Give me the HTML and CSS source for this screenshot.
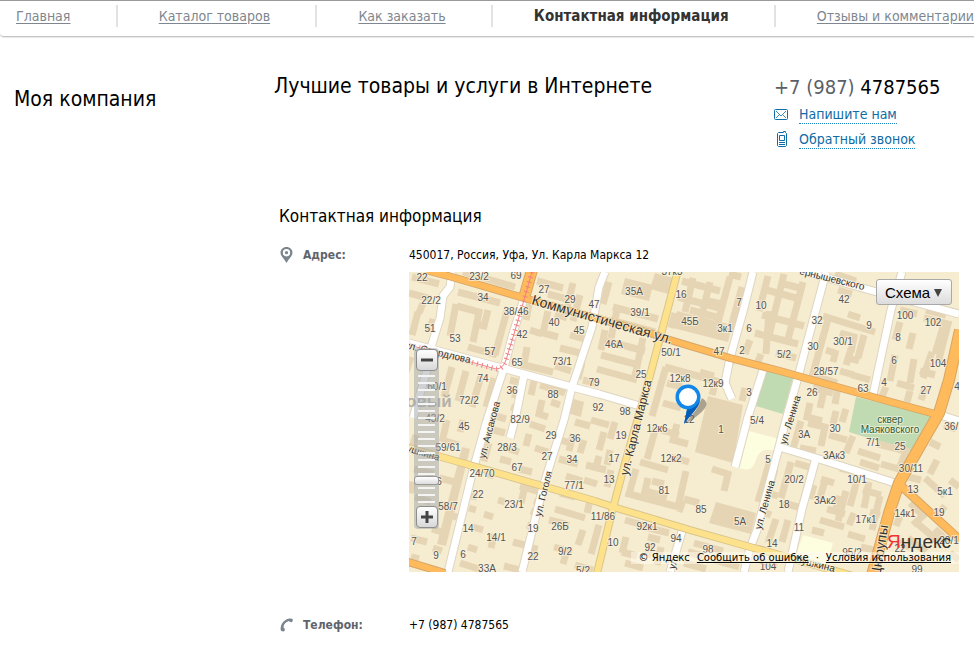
FILE: index.html
```html
<!DOCTYPE html>
<html lang="ru">
<head>
<meta charset="utf-8">
<title>Моя компания — Контактная информация</title>
<meta name="viewport" content="width=device-width, initial-scale=1">
<link rel="stylesheet" href="styles.css">
</head>
<body>
<nav class="nav">
  <ul class="nav-list">
    <li><a href="#">Главная</a></li>
    <li><a href="#">Каталог товаров</a></li>
    <li><a href="#">Как заказать</a></li>
    <li><strong>Контактная информация</strong></li>
    <li><a href="#">Отзывы и комментарии</a></li>
  </ul>
</nav>

<header class="header">
  <div class="company">Моя компания</div>
  <div class="slogan">Лучшие товары и услуги в Интернете</div>
  <div class="contacts">
    <div class="phone"><span>+7 (987)</span> 4787565</div>
    <div class="contact-row">
      <svg width="15" height="15" viewBox="0 0 15 15" fill="none" stroke="#0d6da8"><rect x="0.500" y="2.500" width="13" height="10" rx="1"/><path d="M2 4l5 5 5-5M2 11l3-3M12 11L9 8" stroke-width=".8"/></svg>
      <a href="#">Напишите нам</a>
    </div>
    <div class="contact-row">
      <svg width="15" height="17" viewBox="0 0 15 17" fill="none" stroke="#0d6da8"><path d="M3.500 2.500l1-1h5V.5h2v1l1 1v12l-1 1h-7l-1-1z"/><path d="M5.500 4.500h5v5h-5zM5 11.500h6M5 13.500h6"/></svg>
      <a href="#">Обратный звонок</a>
    </div>
  </div>
</header>

<main class="main">
  <h1>Контактная информация</h1>
  <dl class="details">
    <dt>
      <svg width="15" height="16" viewBox="0 0 15 16"><path fill="#7b858e" fill-rule="evenodd" d="M7.500 0C4 0 1.500 2.500 1.500 5.700 1.500 9 5 11.500 7.500 16 10 11.500 13.500 9 13.500 5.700 13.500 2.500 11 0 7.500 0zm0 2a3.700 3.700 0 1 1 0 7.400 3.700 3.700 0 0 1 0-7.400z"/><circle cx="7.500" cy="5.700" r="1.600" fill="#7b858e"/></svg>
      Адрес:
    </dt>
    <dd>450017, Россия, Уфа, Ул. Карла Маркса 12
      <div class="map">
<svg class="map-canvas" viewBox="409 272 550 300" preserveAspectRatio="xMidYMid slice" role="img" aria-label="Карта">
  <rect x="409" y="272" width="550" height="300" fill="#f6ecd0"/>
  <g fill="#c0dab2"><path d="M766 371l27 7-10 36-27-8z"/><path d="M856 397l78 19-21 36-64-20z"/></g>
  <g fill="#fdfde0"><path d="M749 431l30 8-4 11-10 0q-7 2-9 10-4 12-12 9l-9-1z"/><path d="M803 535l30 8-6 22-32-7z"/></g>
  <!-- buildings -->
  <g fill="#e6d5b4">
    <path d="M708 396l35 9-10 58-38-11z"/><path d="M716 502l40 11-5 21-42-11z"/>
    <path d="M625 278l28 7-4 16-28-7zM655 273l22 6-5 16-22-6zM677 311l55 14-4 17-55-14z"/>
    <path d="M462 447l8 2-24 97-9-2zM570 398l14 4-3 15-14-4z"/>
  </g>
  <g fill="none" stroke="#e6d5b4" stroke-width="7">
    <path d="M409 293l22 6M412 277l27 7M458 292l42 11M463 272l52 15M418 312l-6 23M433 319l-4 13M456 304l-6 32M457 306l22 6-6 30M488 310l-4 16-8-2M508 307l-13 48M468 347l29 8M423 303l-4 10M411 357l-5 15"/>
    <path d="M548 311l-5 22 15 4M555 314l12 4M527 347l-3 18 29 7M537 281l26 7M548 294l22 6M529 304l-3 16M573 283l-6 24M580 295l-7 26M570 335l18 5M560 348l20 5M530 330l12 4M555 366l16 5"/>
    <path d="M452 367l-8 30M466 371l-8 30M481 376l-9 31M494 378l-8 29M510 380l8 2M512 394l8 2M511 407l6 2M540 385l25 8M542 400l-3 14 9 3M534 381l-3 14M551 402l9 3"/>
    <path d="M609 282l-6 22M613 307l45 12M610 320l45 12M602 340l43 11M601 355l38 10M597 369l40 11M617 310l-6 28M643 338l-8 38M582 363l-4 16M605 330l-4 20M583 380l16 4"/>
    <path d="M682 281l38 10M678 297l45 12M693 278l-8 34M710 282l-9 36M730 277l-16 60M742 287l-12 44M690 310l30 8M741 277l-12-3M675 313l-4 15M696 321l22 6M703 300l19 4"/>
    <path d="M665 367l51 14-4 14M666 367l-14 49M667 383l15 4M663 403l18 5M656 427l-9 32M661 430l18 5M677 424l-4 16 15 4M700 372l14 4M726 359l9 3M745 388l-3 13"/>
    <path d="M636 469l-7 25 49 13 8-36M640 462l28 8M648 478l-3 13 22 6M652 481l12 3M684 499l15 4M712 469l16 5-4 17M671 457l18 5M683 500l-4 12"/>
    <path d="M768 276l-9 35M763 289l33 9M784 274l-15 62M803 282l-16 61M762 315l42 11M755 333l43 11M769 311l-3 43M750 340l-5 14M776 353l20 5M761 354l-5 13M780 283l24 6"/>
    <path d="M838 290l14 4M835 274l21 7M823 316l52 16M828 319l-16 58M840 333l14 4-3 15M836 350l-3 12M845 357l14 4M864 335l-6 23M840 371l14 4M852 375l18 5M860 318l-12 -4M826 350l9 3M812 375l25 8M851 349l-5 16"/>
    <path d="M900 310l17 4M900 322l-5 18M913 333l-4 16M924 318l24 6-10 39M914 359l-4 24M895 355l-5 26M932 352l-9 26M897 383l17 5M920 371l15 4M925 388l-4 12M886 387l-5 12M910 391l-3 11M926 310l20 5M945 320l-10 34"/>
    <path d="M813 388l20 5M824 390l-4 18M838 387l-3 17M810 403l-3 14 15 4M836 411l-3 13M846 409l-4 13M801 421l-8 28M808 423l17 4-4 19M829 435l18 5M800 448l16 3M853 436l-7 17M858 451l22 7M878 444l28 7-7 18-18-5M860 462l19 6"/>
    <path d="M791 462l-10 36M795 463l17 5-12 44M814 485l-4 14M783 503l19 5M826 477l-7 24M821 479l13 4M827 509l18 5M820 520l24 7M846 491l-8 30M857 480l-7 26M869 482l-5 26M880 496l-8 34M863 490l18 5M854 513l-5 12M840 496l-4 12M840 468l16 4M870 512l10 3M848 534l17 5M861 547l20 5"/>
    <path d="M908 477l13 3M925 478l20 18M937 460l-7 14M950 480l9 7M910 503l15 14M928 511l-15 14M945 506l-9 11M900 516l-4 10M918 524l21 18M908 538l18 14M935 529l13 13M896 542l14 5M950 553l9 7M907 558l16 5M944 425l12 4M930 442l10 5"/>
    <path d="M463 420l-3 12M447 420l-5 22M418 401l-4 12M442 440l17 5M416 435l-4 14M414 469l20 5M413 482l-3 11M439 478l20 5M415 497l16 5M411 538l16 4M433 548l9 3M445 514l12 3M411 557l8 2M432 529l10 3M440 504l16 4"/>
    <path d="M495 416l11 3M490 429l15 4M489 443l-5 18M503 447l16 5M500 459l11 3M479 456l9 3M487 474l7 2M530 424l15 5M529 434l-3 12M535 448l13 4M519 469l13 3M520 486l26 8M524 490l-3 13M498 500l7 2M469 495l8 2M469 508l7 2M473 527l10 3M494 534l-3 14M468 547l9 3M484 514l9 3M513 542l19 5M535 545l-3 15M460 563l19 6M504 566l20 5"/>
    <path d="M575 422l15 4M573 434l-4 17M584 440l-4 13M591 420l18 5M604 432l-5 18M615 422l-5 17M560 440l14 4M559 459l19 5M586 465l20 5M599 456l-4 15M610 450l-3 15M566 476l16 5M584 480l13 4M611 470l-4 17M555 509l30 9M549 520l20 5M560 493l15 4M591 497l-4 16M599 525l-8 29M554 547l18 5M567 550l-4 14M583 530l-5 15M575 565l18 5M534 501l9 3M531 511l8 3M527 525l8 3"/>
    <path d="M625 520l18 5M637 525l32 8M648 537l12 3M626 537l-4 16M622 552l15 4M625 563l18 5M651 543l-4 14M661 547l-4 18M694 543l29 8M688 552l15 4M684 563l22 6M714 560l25 7M758 548l13 4M776 519l-8 24M763 512l8 3M768 493l10 3M788 520l-6 22M770 460l-12 42M775 469l-6 22M812 530l12 3M757 560l20 6"/>
  </g>
  <!-- street casings, then fills -->
  <defs>
    <g id="white-streets">
      <path d="M452 272l-2 15-7 9-3 22-8 26-5 26-14 48"/>
      <path d="M409 343l37 10 56 15 70 19 27 7 41 12"/>
      <path d="M524 298l-12 39-8 31-17 52-14 50-25 102"/>
      <path d="M605 272l-6 15-7 40-20 60-8 33-21 67-21 85"/>
      <path d="M524 375l-8 40-6 23"/>
      <path d="M753 272l-9 36-14 50-5 25 7 16"/>
      <path d="M763 370l-15 47-13 50"/>
      <path d="M826 272l-28 105-12 43-7 27-22 83-7 18-6 24"/>
      <path d="M800 270l66 19 93 25"/>
      <path d="M902 272l-11 38-18 85"/>
      <path d="M779 447l37 11 79 25M816 458l-14 51-14 63"/>
      <path d="M682 531l-12 41M940 415l19 6"/>
    </g>
    <g id="yellow-streets">
      <path d="M678 270l-18 68-12 45-23 80-12 45-16 65"/>
      <path d="M405 447l40 11 150 43 18 6 77 23 60 17 30 8 80 23"/>
    </g>
    <g id="orange-streets">
      <path d="M425 270l27 7 72 21 126 35 20 7 60 18 50 13 93 26 62 17"/>
      <path d="M405 561l40 12"/>
    </g>
    <g id="avenue"><path d="M532 270l-8 28M960 330l-11 50-10 33-23 40-17 30-10 30-17 62"/></g>
    <path id="branch" d="M898 483l62 57"/>
  </defs>
  <g fill="none" stroke-linejoin="round">
    <use href="#white-streets" stroke="#ded5c2" stroke-width="9"/>
    <use href="#white-streets" stroke="#fff" stroke-width="7"/>
    <use href="#yellow-streets" stroke="#d9c58b" stroke-width="8"/>
    <use href="#yellow-streets" stroke="#fee28b" stroke-width="6"/>
    <use href="#orange-streets" stroke="#d7a666" stroke-width="8"/>
    <use href="#branch" stroke="#d7a666" stroke-width="9"/>
    <use href="#avenue" stroke="#d7a666" stroke-width="12"/>
    <use href="#orange-streets" stroke="#ffba5b" stroke-width="6"/>
    <use href="#branch" stroke="#ffba5b" stroke-width="7"/>
    <use href="#avenue" stroke="#ffba5b" stroke-width="10"/>
  </g>
  <g fill="none" stroke="#f08080">
    <path d="M532 272l-8 28-10 34-8 26q-3 9-10 9l-87-24"/>
    <path d="M532 272l-8 28-10 34-8 26q-3 9-10 9l-87-24" stroke-width="5" stroke-dasharray="1 4"/>
  </g>
  <text class="district" x="406" y="407">овый</text>
  <g class="houses">
    <text x="422" y="281">22</text><text x="479" y="280">23/2</text><text x="516" y="279">69</text><text x="544" y="293">27</text><text x="570" y="303">29</text><text x="594" y="308">47</text><text x="431" y="304">22/2</text><text x="483" y="301">34</text><text x="516" y="315">38/46</text><text x="554" y="326">40</text><text x="579" y="334">45</text><text x="430" y="332">51</text><text x="455" y="342">53</text><text x="522" y="338">42</text><text x="490" y="355">57</text><text x="517" y="366">65</text><text x="562" y="365">73/1</text><text x="483" y="382">74</text><text x="512" y="394">36</text><text x="553" y="398">88</text><text x="594" y="386">79</text><text x="437" y="390">60/1</text><text x="469" y="404">72/2</text><text x="435" y="422">43/2</text><text x="520" y="423">82/9</text><text x="598" y="411">92</text><text x="625" y="415">98</text>
    <text x="672" y="275">37к3</text><text x="634" y="295">35А</text><text x="681" y="298">16</text><text x="640" y="316">39/1</text><text x="690" y="325">45Б</text><text x="614" y="348">46А</text><text x="671" y="356">50/1</text><text x="641" y="378">25</text><text x="739" y="306">7</text><text x="761" y="309">10</text><text x="725" y="332">3к1</text><text x="749" y="332">6</text><text x="719" y="355">47</text><text x="742" y="354">2</text><text x="680" y="382">12к8</text><text x="713" y="387">12к9</text><text x="749" y="396">3</text><text x="757" y="424">5/4</text>
    <text x="844" y="303">42</text><text x="905" y="319">100</text><text x="933" y="326">102</text><text x="817" y="324">32</text><text x="869" y="329">9</text><text x="898" y="341">8</text><text x="843" y="345">30/1</text><text x="813" y="350">30</text><text x="784" y="358">5/2</text><text x="894" y="364">6</text><text x="938" y="367">104</text><text x="826" y="375">28/57</text><text x="884" y="386">4</text><text x="863" y="392">63</text><text x="926" y="394">27</text><text x="812" y="396">26</text><text x="957" y="390">4</text>
    <text x="464" y="430">45</text><text x="551" y="439">29</text><text x="575" y="442">36</text><text x="448" y="451">59/61</text><text x="507" y="451">28/3</text><text x="547" y="460">27</text><text x="572" y="463">34</text><text x="517" y="471">67</text><text x="482" y="477">24/70</text><text x="439" y="485">6</text><text x="574" y="489">77/1</text><text x="478" y="498">22</text><text x="448" y="510">58/7</text><text x="514" y="508">23/1</text><text x="468" y="532">14</text><text x="533" y="532">19</text><text x="560" y="530">26Б</text><text x="496" y="541">14/1</text><text x="414" y="545">7</text><text x="436" y="559">9</text><text x="463" y="558">6</text><text x="533" y="560">22</text><text x="565" y="555">9/2</text><text x="487" y="572">33А</text><text x="583" y="574">5/2</text>
    <text x="657" y="432">12к6</text><text x="721" y="433">1</text><text x="621" y="439">19</text><text x="614" y="462">17</text><text x="609" y="483">13</text><text x="671" y="462">12к2</text><text x="664" y="494">81</text><text x="768" y="463">5</text><text x="701" y="513">85</text><text x="740" y="525">5А</text><text x="603" y="520">11/86</text><text x="647" y="530">92к1</text><text x="613" y="546">10</text><text x="676" y="542">94</text><text x="650" y="551">92</text><text x="708" y="553">98</text><text x="772" y="547">14</text><text x="768" y="570">104</text><text x="689" y="423">12</text>
    <text x="804" y="438">3А</text><text x="835" y="432">30</text><text x="873" y="446">7/1</text><text x="900" y="450">25</text><text x="954" y="430">36/1</text><text x="834" y="459">3Ак3</text><text x="911" y="472">30/11</text><text x="794" y="483">20/2</text><text x="857" y="483">10/1</text><text x="913" y="493">13</text><text x="945" y="495">5к1</text><text x="784" y="508">18</text><text x="825" y="504">3Ак2</text><text x="905" y="517">14к1</text><text x="939" y="516">19</text><text x="866" y="523">17к1</text><text x="799" y="531">11</text><text x="900" y="552">22</text><text x="852" y="556">95/2</text><text x="949" y="544">20/1</text><text x="917" y="573">99</text>
  </g>
  <g class="streets">
    <text class="major" transform="translate(531 304) rotate(16)">Коммунистическая ул.</text>
    <text transform="translate(404 348) rotate(13)">ул. Свердлова</text>
    <text transform="translate(799 274) rotate(14)">ернышевского</text>
    <text transform="translate(406 451) rotate(17)">ушкина</text>
    <text transform="translate(485 459) rotate(-75)">ул. Аксакова</text>
    <text transform="translate(541 517) rotate(-76)">ул. Гоголя</text>
    <text class="medium" transform="translate(628 476) rotate(-76)">ул. Карла Маркса</text>
    <text transform="translate(761 530) rotate(-74)">ул. Ленина</text>
    <text transform="translate(786 445) rotate(-73)">ул. Ленина</text>
    <text transform="translate(794 562) rotate(14)">Пушкина</text>
    <text transform="translate(671 583) rotate(-74)">ая ул.</text>
    <text class="major" transform="translate(880 578) rotate(-81)">Цюрупы</text>
  </g>
  <g class="park"><text x="890" y="423">сквер</text><text x="890" y="433">Маяковского</text></g>
  <path d="M686 423l10-13 6-12q7 4 3 10-6 8-19 15z" fill="#6c6557" opacity=".55"/>
  <path d="M684 424l3-14.500A12.500 12.500 0 1 1 700.500 397C700.500 407 691 414 684 424z" fill="#1187ea"/>
  <path d="M684 424l3-14.500q8 0 13-9C698 409 690 415 684 424z" fill="#075cb4"/>
  <circle cx="688" cy="397" r="9" fill="#fff"/>
</svg>
        <div class="zoom">
          <button type="button" aria-label="Отдалить"><svg width="20" height="20"><path d="M4 10h12" stroke="#444" stroke-width="3"/></svg></button>
          <input type="range" min="0" max="18" value="15" aria-label="Масштаб">
          <button type="button" aria-label="Приблизить"><svg width="20" height="20"><path d="M4 10h12M10 4v12" stroke="#444" stroke-width="3"/></svg></button>
        </div>
        <div class="layer">
          <select aria-label="Тип карты"><option>Схема</option></select>
          <svg width="8" height="8" viewBox="0 0 8 8"><path d="M0 0h8L4 8z" fill="#444"/></svg>
        </div>
        <div class="map-logo"><span>Я</span>ндекс</div>
        <div class="map-links"><span>© Яндекс</span><a href="#">Сообщить об ошибке</a><span>·</span><a href="#">Условия использования</a></div>
      </div>
    </dd>
    <dt>
      <svg width="15" height="16" viewBox="0 0 15 16"><path fill="#7b858e" d="M5 14.500L2 14C.500 9 4 2.500 10.500 1.500 12 1.200 14 2 14 3l-1 2c-1 .500-2.500 0-3-1C6.500 5 4.500 7.500 4.500 10.500c1 .500 1.500 1.500 1.300 2.700z"/></svg>
      Телефон:
    </dt>
    <dd>+7 (987) 4787565</dd>
  </dl>
</main>
</body>
</html>
```
FILE: styles.css
```css
* { box-sizing: border-box; }

body {
  margin: 0;
  background: #fff;
  color: #000;
  font-family: "DejaVu Sans Condensed", "DejaVu Sans", sans-serif;
  font-size: 12px;
}

.nav {
  height: 37px;
  margin-right: 2px;
  border-top: 1px solid #999;
  border-bottom: 1px solid #c4c4c4;
  border-bottom-left-radius: 4px;
  box-shadow: 0 1px 1px #e8e8e8;
}
.nav-list {
  display: flex;
  justify-content: space-between;
  margin: 0;
  padding: 4px 0 0;
  list-style: none;
  font-size: 14px;
  line-height: 22px;
  white-space: nowrap;
}
.nav-list li { flex: 1 1 auto; padding-left: 41px; border-left: 2px solid #e2e2e2; }
.nav-list li:first-child { padding-left: 16px; border-left: 0; }
.nav-list li:last-child { flex: none; }
.nav-list a { color: #7e878f; text-underline-offset: 2px; }
.nav-list strong { color: #333; font-size: 15px; }

.header {
  display: grid;
  grid-template-columns: 260px 1fr 188px;
  padding: 36px 14px 0;
  height: 167px;
}
.company { padding-top: 13px; font-size: 21px; line-height: 26px; }
.slogan { font-size: 21px; line-height: 26px; }
.phone { font-size: 20px; line-height: 29px; white-space: nowrap; }
.phone span { color: #5b6067; }
.contact-row { display: flex; align-items: center; gap: 10px; height: 25px; }
.contact-row a {
  border-bottom: 1px dotted #1c85c6;
  color: #0f6ba5;
  font-size: 14px;
  line-height: 17px;
  text-decoration: none;
}

.main { padding: 0 17px 20px 279px; }
h1 { margin: 0; font-size: 17px; font-weight: 400; line-height: 24px; }
.details {
  display: grid;
  grid-template-columns: 130px 1fr;
  margin: 18px 0 0;
  line-height: 18px;
}
.details dt { display: flex; align-items: center; gap: 9px; height: 18px; color: #5f656c; font-weight: 700; }
.details dd { margin: 0; }

.map { position: relative; height: 300px; margin: 8px 0 44px; overflow: hidden; }
.map-canvas { display: block; width: 100%; height: 100%; font-family: "Liberation Sans", sans-serif; }
.map-canvas text { paint-order: stroke; stroke: #fbf3df; stroke-width: 2px; stroke-opacity: .7; }
.houses { fill: #555; font-size: 10px; text-anchor: middle; }
.streets { fill: #333; font-size: 10px; }
.streets .medium { font-size: 12px; }
.streets .major { font-size: 14px; }
.park { fill: #2f5d35; font-size: 10px; text-anchor: middle; }
.map-canvas .district { fill: #b5b1a8; font-size: 17px; font-weight: 700; stroke: none; }

.zoom {
  position: absolute;
  top: 76px;
  left: 5px;
  display: flex;
  flex-direction: column;
  align-items: center;
  width: 25px;
  padding: 1px 0;
  border-radius: 4px;
  background: rgba(160, 165, 172, .5);
}
.zoom button {
  width: 22px;
  height: 22px;
  padding: 0;
  border: 1px solid #8d8d8d;
  border-radius: 4px;
  background: linear-gradient(#fff, #d8d8d8);
}
.zoom button svg { display: block; }
.zoom input {
  width: 25px;
  height: 135px;
  margin: 0;
  appearance: none;
  writing-mode: vertical-lr;
  background: repeating-linear-gradient(transparent 0 4px, #f4f4f4 4px 6px, transparent 6px 7px) center / 17px 100% no-repeat;
}
.zoom input::-webkit-slider-thumb {
  appearance: none;
  width: 25px;
  height: 9px;
  border: 1px solid #999;
  border-radius: 3px;
  background: linear-gradient(#fff, #ddd);
}

.layer { position: absolute; top: 7px; right: 7px; }
.layer select {
  width: 76px;
  height: 26px;
  padding: 0 8px;
  appearance: none;
  border: 1px solid #a9a9a9;
  border-radius: 3px;
  background: linear-gradient(#fff, #dcdcdc);
  color: #000;
  font: 15px "Liberation Sans", sans-serif;
}
.layer svg { position: absolute; top: 10px; right: 10px; pointer-events: none; }

.map-logo {
  position: absolute;
  right: 8px;
  bottom: 16px;
  color: #333;
  font: 19px/28px "Liberation Sans Narrow", "Liberation Sans", sans-serif;
}
.map-logo span { color: #e33; }
.map-links {
  position: absolute;
  right: 0;
  bottom: 8px;
  display: flex;
  gap: 7px;
  padding: 0 8px;
  background: rgba(255, 252, 240, .5);
  font: 10px/12px "DejaVu Sans", sans-serif;
  white-space: nowrap;
}
.map-links a { color: #000; }
```
